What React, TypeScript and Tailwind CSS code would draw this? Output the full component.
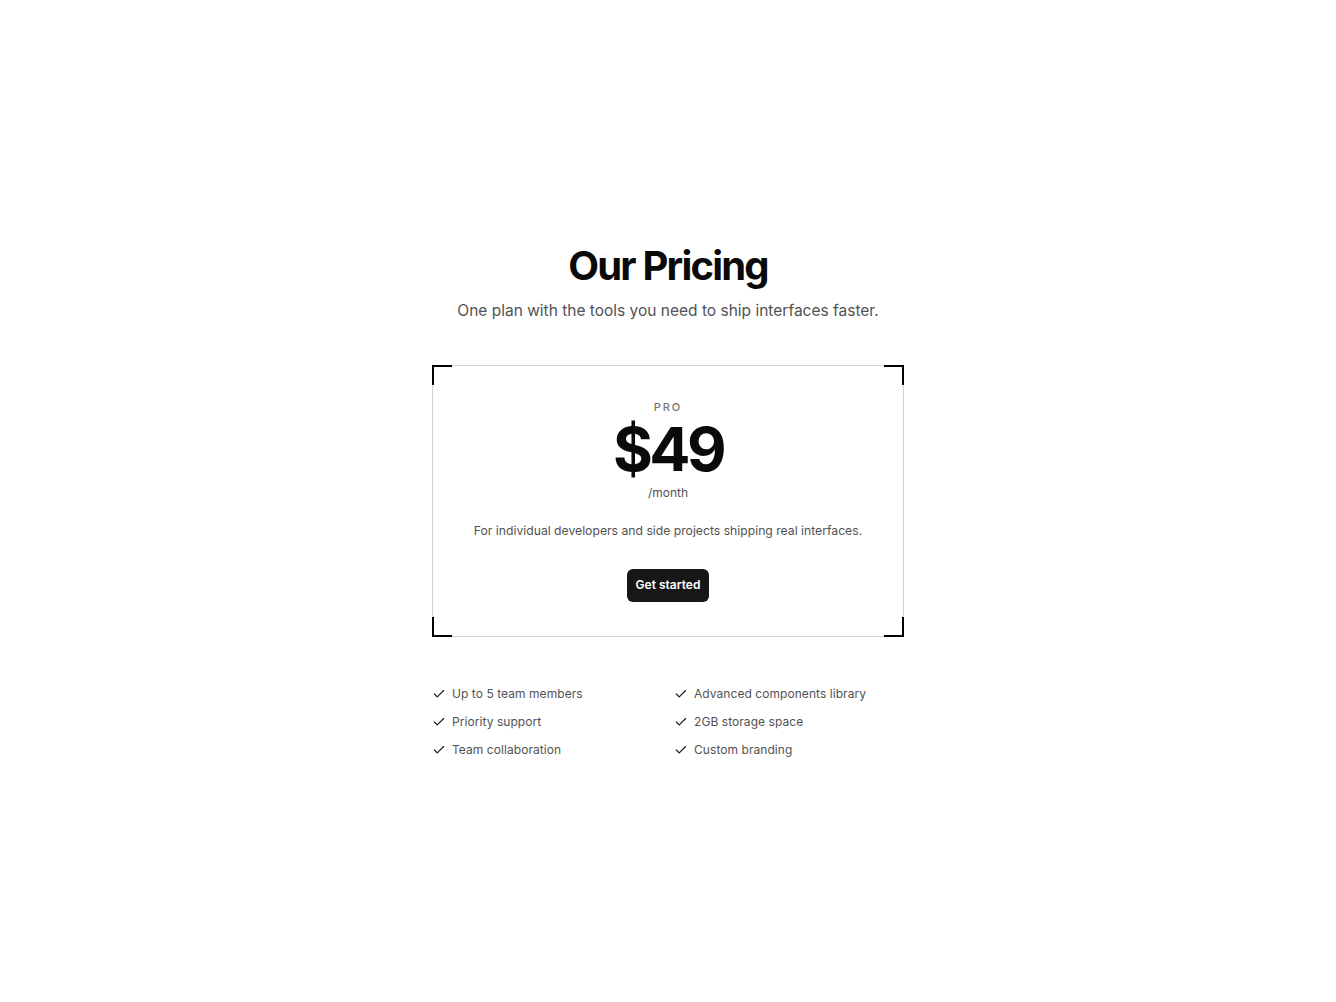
import { Check } from 'lucide-react';

const features = [
  'Up to 5 team members',
  'Advanced components library',
  'Priority support',
  '2GB storage space',
  'Team collaboration',
  'Custom branding',
];

function Corner({ pos }: { pos: string }) {
  return <span className={`pointer-events-none absolute h-5 w-5 border-black ${pos}`} />;
}

export default function App() {
  return (
    <div className="flex min-h-screen items-center justify-center bg-white font-['Inter',sans-serif] text-neutral-900">
      <div className="flex w-[472px] flex-col items-center">
        <h1 className="text-[40px] font-bold leading-[48px] tracking-[-0.045em] text-neutral-950">Our Pricing</h1>
        <p className="mt-[9px] whitespace-nowrap text-[15.5px] text-neutral-600">One plan with the tools you need to ship interfaces faster.</p>

        <div className="relative mt-[42px] flex h-[272px] w-full flex-col items-center border border-neutral-300 pt-[33px]">
          <Corner pos="-left-px -top-px border-l-2 border-t-2" />
          <Corner pos="-right-px -top-px border-r-2 border-t-2" />
          <Corner pos="-bottom-px -left-px border-b-2 border-l-2" />
          <Corner pos="-bottom-px -right-px border-b-2 border-r-2" />

          <span className="text-[11px] font-medium leading-4 tracking-[0.18em] text-neutral-500">PRO</span>
          <span className="mt-1 text-[61px] font-bold leading-none tracking-[-0.06em] text-neutral-950">$49</span>
          <span className="mt-[5px] text-[12px] leading-4 text-neutral-600">/month</span>
          <p className="mt-5 text-[12.2px] leading-5 text-neutral-600">
            For individual developers and side projects shipping real interfaces.
          </p>
          <button className="mt-7 h-[33px] rounded-md bg-neutral-900 px-[9px] text-[12px] font-semibold text-white">
            Get started
          </button>
        </div>

        <ul className="mt-[47px] grid w-full grid-cols-2 gap-x-3 gap-y-2">
          {features.map((f) => (
            <li key={f} className="flex h-5 items-center gap-1.5 text-[12px] tracking-[0.005em] text-neutral-600">
              <Check className="h-3.5 w-3.5 text-neutral-900" strokeWidth={2} />
              {f}
            </li>
          ))}
        </ul>
      </div>
    </div>
  );
}
